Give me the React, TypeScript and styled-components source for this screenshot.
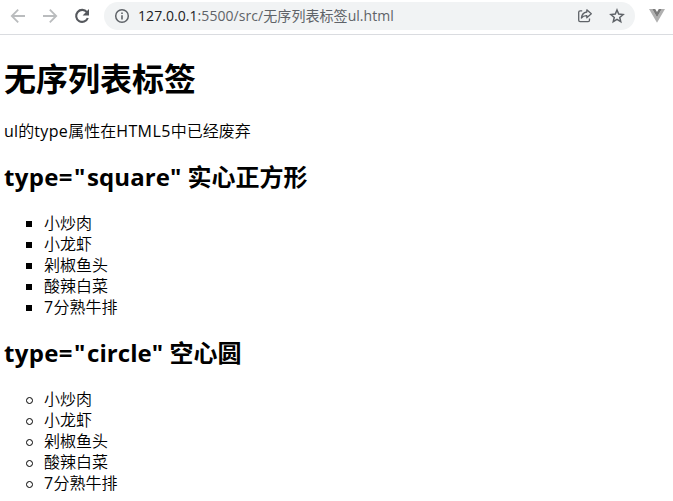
import React from 'react';
import styled, { createGlobalStyle } from 'styled-components';

const GlobalStyle = createGlobalStyle`
  body {
    margin: 0;
    background: #fff;
    color: #000;
    overflow: hidden;
    font-family: 'Open Sans', 'Noto Sans CJK SC', sans-serif;
  }
`;

const Toolbar = styled.header`
  display: flex;
  align-items: flex-start;
  height: 34px;
  border-bottom: 1px solid #dadce0;
`;

const NavIcons = styled.div`
  display: flex;
  gap: 16px;
  padding: 8px 0 0 10px;
  width: 94px;
  svg {
    flex: none;
  }
`;

const AddressBar = styled.div`
  display: flex;
  align-items: center;
  box-sizing: border-box;
  width: 531px;
  height: 28px;
  margin-top: 2px;
  padding: 0 10px;
  border-radius: 14px;
  background: #f1f3f4;
`;

const Url = styled.div`
  flex: 1;
  margin-left: 8px;
  font-size: 14px;
  line-height: 28px;
  letter-spacing: 0.06px;
  white-space: nowrap;
  color: #5f6368;
`;

const Host = styled.span`
  color: #202124;
`;

const Actions = styled.div`
  display: flex;
  gap: 16px;
`;

const VueSlot = styled.div`
  padding: 9px 0 0 14px;
  line-height: 0;
`;

const Page = styled.main`
  padding: 23px 4px 0;
`;

const Latin = styled.span<{ $weight?: number; $track?: number }>`
  font-weight: ${({ $weight = 400 }) => $weight};
  letter-spacing: ${({ $track = 0 }) => $track}px;
`;

const Title = styled.h1`
  margin: 0 0 21px;
  font-size: 32px;
  line-height: 42px;
`;

const Text = styled.p`
  margin: 0;
  font-size: 16px;
  line-height: 21px;
  font-weight: 350;
`;

const Subtitle = styled.h2`
  margin: 19px 0 21px;
  font-size: 24px;
  line-height: 31px;
  white-space: nowrap;
`;

const List = styled.ul`
  margin: 0;
  padding: 0 0 0 22px;
  list-style: none;
  font-size: 16px;
  line-height: 21px;
  font-weight: 350;
`;

const Item = styled.li<{ $shape: 'square' | 'circle' }>`
  display: flex;
  height: 21px;
  &::before {
    content: '';
    flex: none;
    box-sizing: border-box;
    width: ${({ $shape }) => ($shape === 'square' ? 6 : 7)}px;
    height: ${({ $shape }) => ($shape === 'square' ? 6 : 7)}px;
    margin: 8px ${({ $shape }) => ($shape === 'square' ? 12 : 11)}px 0 0;
    ${({ $shape }) =>
      $shape === 'square' ? 'background: #000;' : 'border: 1px solid #000; border-radius: 50%;'}
  }
`;

const dishes = [
  { latin: '', name: '小炒肉' },
  { latin: '', name: '小龙虾' },
  { latin: '', name: '剁椒鱼头' },
  { latin: '', name: '酸辣白菜' },
  { latin: '7', name: '分熟牛排' },
];

function DishList({ shape }: { shape: 'square' | 'circle' }) {
  return (
    <List>
      {dishes.map(({ latin, name }) => (
        <Item key={name} $shape={shape}>
          {latin && <Latin $track={0.4}>{latin}</Latin>}
          {name}
        </Item>
      ))}
    </List>
  );
}

function TypeHeading({ type, label }: { type: string; label: string }) {
  return (
    <Subtitle>
      <Latin $weight={700} $track={0.3}>type</Latin>
      <Latin $weight={700} $track={1.7}>="</Latin>
      <Latin $weight={700} $track={0.05}>{type}" </Latin>
      {label}
    </Subtitle>
  );
}

const BackIcon = () => (
  <svg width="16" height="16" viewBox="0 0 16 16" fill="none" stroke="#babcbe" strokeWidth="1.8">
    <path d="M15 8H2.5M8.2 1.6 1.8 8l6.4 6.4" />
  </svg>
);

const ForwardIcon = () => (
  <svg width="16" height="16" viewBox="0 0 16 16" fill="none" stroke="#babcbe" strokeWidth="1.8">
    <path d="M1 8h12.5M7.8 1.6 14.2 8l-6.4 6.4" />
  </svg>
);

const ReloadIcon = () => (
  <svg width="16" height="16" viewBox="0 0 16 16">
    <path d="M12.9 4.2A6 6 0 1 0 13.8 10" fill="none" stroke="#55585d" strokeWidth="2.1" />
    <path d="M15 1v6.4H8.6z" fill="#55585d" />
  </svg>
);

const InfoIcon = () => (
  <svg width="16" height="16" viewBox="0 0 16 16">
    <circle cx="8" cy="8" r="6.3" fill="none" stroke="#5f6368" strokeWidth="1.5" />
    <path d="M7.2 7.2h1.6v4.3H7.2zM7.2 4.5h1.6v1.6H7.2z" fill="#5f6368" />
  </svg>
);

const ShareIcon = () => (
  <svg width="16" height="16" viewBox="0 0 16 16" fill="none" stroke="#5f6368" strokeWidth="1.3" strokeLinejoin="round">
    <path d="M5.2 2.9H3.1Q1.7 2.9 1.7 4.3v7.9q0 1.4 1.4 1.4h8q1.4 0 1.4-1.4v-1.6" />
    <path d="M9.8 1.8 14.3 5.8 9.8 9.8V7.6Q6.3 7.4 4.4 10 5 4.8 9.8 4z" />
  </svg>
);

const StarIcon = () => (
  <svg width="16" height="16" viewBox="0 0 16 16" fill="none" stroke="#5f6368" strokeWidth="1.5">
    <path d="m8 2 1.7 4.1 4.4.4-3.35 2.9 1 4.3L8 11.4l-3.75 2.3 1-4.3L1.9 6.5l4.4-.4z" />
  </svg>
);

const VueIcon = () => (
  <svg width="16" height="14" viewBox="0 0 16 14">
    <path d="M0 0h3.2L8 8.2 12.8 0H16L8 13.8z" fill="#b0b0b0" />
    <path d="M3.2 0h3L8 3.1 9.8 0h3L8 8.2z" fill="#7b7b7b" />
  </svg>
);

export default function App() {
  return (
    <>
      <GlobalStyle />
      <Toolbar>
        <NavIcons>
          <BackIcon />
          <ForwardIcon />
          <ReloadIcon />
        </NavIcons>
        <AddressBar>
          <InfoIcon />
          <Url>
            <Host>127.0.0.1</Host>:5500/src/无序列表标签ul.html
          </Url>
          <Actions>
            <ShareIcon />
            <StarIcon />
          </Actions>
        </AddressBar>
        <VueSlot>
          <VueIcon />
        </VueSlot>
      </Toolbar>
      <Page>
        <Title>无序列表标签</Title>
        <Text>
          <Latin $track={0.2}>ul</Latin>的<Latin $track={0.35}>type</Latin>属性在<Latin $track={0.4}>HTML5</Latin>中已经废弃
        </Text>
        <TypeHeading type="square" label="实心正方形" />
        <DishList shape="square" />
        <TypeHeading type="circle" label="空心圆" />
        <DishList shape="circle" />
      </Page>
    </>
  );
}
